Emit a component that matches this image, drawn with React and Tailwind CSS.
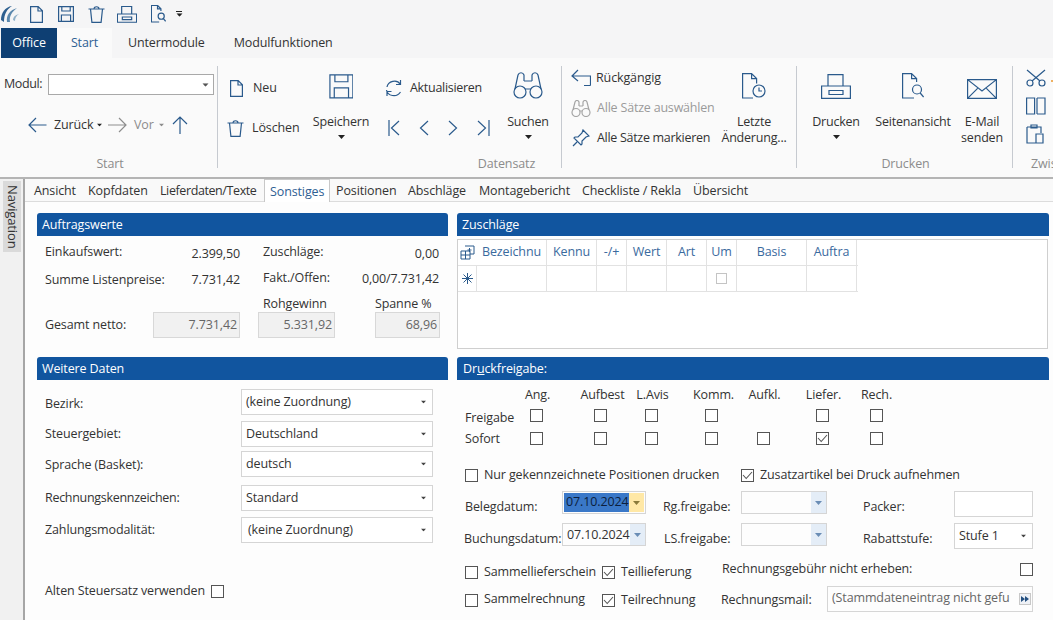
import React from "react";

const S = "#2a5a8c";
const Ic = ({ w, h, className = "", color = S, sw = 1.2, children }) => (
  <svg width={w} height={h} viewBox={`0 0 ${w} ${h}`} fill="none" stroke={color} strokeWidth={sw} className={`shrink-0 ${className}`}>
    {children}
  </svg>
);
const Caret = ({ color = "#222", className = "" }) => (
  <svg width="7" height="4" viewBox="0 0 7 4" className={`shrink-0 ${className}`}><path d="M0 0h7L3.5 4z" fill={color} /></svg>
);
const DocI = () => (
  <Ic w={13} h={17}><path d="M.6.6h7.6l4.2 4.2v11.6H.6zM8 .6v4.4h4.4" /></Ic>
);
const TrashI = () => (
  <Ic w={17} h={17}><path d="M.5 3h16M2.5 3l1.4 13.4h9.2L14.5 3M6 3c0-3 5-3 5 0" /></Ic>
);
const SaveI = ({ s = 1 }) => (
  <Ic w={16 * s} h={16 * s} sw={1.2 / s}><g transform={`scale(${s})`}><path d="M.6.6h14.8v14.8H.6zM3.8.6v4.4h8.4V.6M3.4 15.4V9h9.2v6.4" /></g></Ic>
);
const PrintI = ({ w = 30, h = 25 }) => (
  <Ic w={w} h={h} sw={1.2 * 30 / w}><g transform={`scale(${w / 30})`}><path d="M7 12V.6h15V12M.6 12h28.8v12.4H.6zM8 16.5h14v4H8z" /></g></Ic>
);
const PreviewI = ({ s = 1 }) => (
  <Ic w={22 * s} h={26 * s} sw={1.2 / s}><g transform={`scale(${s})`}><path d="M12 25H.6V.6h9l5 5V9M9.6.6v5h5" /><circle cx="15" cy="16.5" r="4.5" /><path d="M18.2 20l3.4 4" /></g></Ic>
);
const Big = ({ icon, lines, caret, w, ml = 0 }) => (
  <div className="flex flex-col items-center" style={{ width: w, marginLeft: ml }}>
    <div className="flex items-end justify-center h-[33px]">{icon}</div>
    <div className="mt-[15px] text-center leading-[16px] whitespace-nowrap tracking-[-0.2px]">
      {lines.map((l) => <div key={l}>{l}</div>)}
    </div>
    {caret && <Caret className="mt-[5px]" />}
  </div>
);
const Group = ({ w, label, children, labelClass = "", last }) => (
  <div className={`shrink-0 flex flex-col relative ${last ? "" : "border-r border-[#c6cad0]"} h-[102px] mt-[8px]`} style={{ width: w }}>
    <div className="flex h-[90px] shrink-0">{children}</div>
    <div className={`text-center text-[#8c8c8c] leading-[16px] ${labelClass}`}>{label}</div>
  </div>
);

const Check = ({ on, className = "", light }) => (
  <div className={`w-[13px] h-[13px] shrink-0 border ${light ? "border-[#c4c4c4]" : "border-[#555]"} bg-white flex items-center justify-center ${className}`}>
    {on && (
      <svg width="11" height="9" viewBox="0 0 11 9" fill="none" stroke="#555" strokeWidth="1.1"><path d="M1 4l3.2 3.5L10 1" /></svg>
    )}
  </div>
);
const Header = ({ children, className = "" }) => (
  <div className={`h-[23px] bg-[#11559f] text-white rounded-t-[3px] px-[5px] leading-[23px] text-[12.5px] ${className}`}>{children}</div>
);
const Select = ({ v, w = 192, h = 26, indent = 4 }) => (
  <div className="flex items-center justify-between border border-[#d5d5d5] bg-white shrink-0 pr-[5px]" style={{ width: w, height: h, paddingLeft: indent }}>
    <span>{v}</span>
    <Caret className="scale-75" color="#444" />
  </div>
);
const Row = ({ label, v, h, mt, indent, off = 0, labelClass = "" }) => (
  <div className="flex items-center" style={{ height: h, marginTop: mt }}>
    <div className={`w-[204px] pl-[8px] whitespace-nowrap ${labelClass}`} style={{ marginTop: off * 2 }}>{label}</div>
    <Select v={v} h={h} indent={indent} />
  </div>
);
const BlueDrop = ({ className = "" }) => (
  <div className={`w-[15px] self-stretch flex items-center justify-center bg-[#e4edf7] ${className}`}>
    <Caret color="#6a8db5" />
  </div>
);
const ReadOnly = ({ w, v, ml }) => (
  <div className="h-[26px] border border-[#d8d8d8] bg-[#f1f1f1] text-[#666] text-right pr-[2px] leading-[24px]" style={{ width: w, marginLeft: ml }}>{v}</div>
);

const tabs = [
  ["Ansicht", 54], ["Kopfdaten", 72], ["Lieferdaten/Texte", 110.5], ["Sonstiges", 65.5], ["Positionen", 72],
  ["Abschläge", 71], ["Montagebericht", 103], ["Checkliste / Rekla", 111], ["Übersicht", 60],
];
const cols = [
  { w: 19, t: "" }, { w: 70, t: "Bezeichnu" }, { w: 50, t: "Kennu" }, { w: 30, t: "-/+" }, { w: 40, t: "Wert" },
  { w: 40, t: "Art" }, { w: 30, t: "Um" }, { w: 70, t: "Basis" }, { w: 50, t: "Auftra" },
];
const freigabe = [
  ["Ang.", 0, 2], ["Aufbest", 51, 4], ["L.Avis", 38, 2], ["Komm.", 47, 4], ["Aufkl.", 39, 2], ["Liefer.", 46, 2], ["Rech.", 41, 0],
];

export default function App() {
  return (
    <div className="w-[1053px] h-[620px] overflow-hidden bg-white text-[12.5px] text-[#333] flex flex-col" style={{ fontFamily: '"Open Sans", "Noto Sans", sans-serif', letterSpacing: "-0.12px" }}>
      {/* quick access */}
      <div className="h-[28px] bg-[#f5f5f6] flex items-center shrink-0">
        <svg width="18" height="19" viewBox="0 0 18 19" fill="none" className="ml-[1px] shrink-0">
          <path d="M0 15C0 8 4 2 11 1 6 4 3 9 3 17z" fill="#2d5f8f" />
          <path d="M6 17C5 10 9 5 16 3 11 7 8 11 9 17z" fill="#5b88ad" />
          <path d="M12 15c0-3 2-5 6-6-3 2-4 4-4 7z" fill="#8fb0c8" />
        </svg>
        <div className="ml-[11px] flex items-center"><DocI /></div>
        <div className="ml-[15px]"><SaveI /></div>
        <div className="ml-[14px]"><TrashI /></div>
        <div className="ml-[12px]"><PrintI w={20} h={17} /></div>
        <div className="ml-[14px]"><PreviewI s={0.68} /></div>
        <div className="ml-[10px] flex flex-col items-center gap-[1px]">
          <div className="w-[6px] h-[1px] bg-[#222]" />
          <Caret className="scale-90" />
        </div>
      </div>
      {/* ribbon tabs */}
      <div className="h-[30px] bg-[#f5f5f6] flex items-stretch shrink-0 pl-[1px]">
        <div className="w-[56px] bg-[#0e3f73] text-white flex items-center justify-center">Office</div>
        <div className="w-[55px] bg-[#fafafa] text-[#2f6093] flex items-center justify-center">Start</div>
        <div className="ml-[16px] flex items-center">Untermodule</div>
        <div className="ml-[29px] flex items-center">Modulfunktionen</div>
      </div>
      {/* ribbon */}
      <div className="h-[121px] bg-[#fafafa] border-b-2 border-[#b4b4b4] flex shrink-0 overflow-hidden">
        <Group w={218} label="Start" labelClass="pl-[3px]">
          <div className="flex flex-col w-full">
            <div className="flex items-center mt-[8px] h-[21px]">
              <span className="ml-[4px] w-[44px] whitespace-nowrap tracking-[-0.4px]">Modul:</span>
              <div className="w-[166px] h-[21px] border border-[#a9a9a9] bg-white flex items-center justify-end pr-[4px]"><Caret className="scale-90" color="#555" /></div>
            </div>
            <div className="flex items-center mt-[19px] ml-[28px] h-[22px]">
              <Ic w={19} h={16}><path d="M18.500 8H1M8 1 1 8l7 7" /></Ic>
              <span className="ml-[7px] w-[38px]">Zurück</span>
              <Caret className="ml-[4px] scale-75" />
              <Ic w={19} h={16} className="ml-[5px]" color="#8d8d8d"><path d="M0 8h18M11 1l7 7-7 7" /></Ic>
              <span className="ml-[7px] w-[20px] text-[#8c8c8c]">Vor</span>
              <Caret className="ml-[4px] scale-75" color="#8c8c8c" />
              <Ic w={16} h={18} className="ml-[7px]"><path d="M8 18V1M1 8l7-7 7 7" /></Ic>
            </div>
          </div>
        </Group>
        <Group w={344} label="Datensatz" labelClass="pl-[234px]">
          <div className="flex flex-col w-[83px] shrink-0">
            <div className="flex items-center h-[17px] mt-[14px] ml-[12px]">
              <DocI />
              <span className="ml-[10px]">Neu</span>
            </div>
            <div className="flex items-center h-[17px] mt-[23px] ml-[9px]">
              <TrashI />
              <span className="ml-[8px] whitespace-nowrap">Löschen</span>
            </div>
          </div>
          <Big w={70} ml={5} icon={<SaveI s={1.55} />} lines={["Speichern"]} caret />
          <div className="flex flex-col shrink-0 ml-[2px]">
            <div className="flex items-center h-[20px] mt-[12px] ml-[7px]">
              <Ic w={18} h={18}><path d="M2 8c1-6 10-8 13-3M1.500 11c1 6 10 8 14 2M15.500 1v4.500H11M2 17v-4.500h4.500" /></Ic>
              <span className="ml-[7px] whitespace-nowrap tracking-[-0.3px]">Aktualisieren</span>
            </div>
            <div className="flex items-center h-[16px] mt-[22px] ml-[10px]">
              <Ic w={12} h={16}><path d="M1 0v16M11 1 3.500 8l7.500 7" /></Ic>
              <Ic w={10} h={16} className="ml-[19px]"><path d="M9 1 1.500 8 9 15" /></Ic>
              <Ic w={10} h={16} className="ml-[19px]"><path d="M1 1l7.500 7L1 15" /></Ic>
              <Ic w={13} h={16} className="ml-[19px]"><path d="M1 1l7.500 7L1 15M12 0v16" /></Ic>
            </div>
          </div>
          <Big w={52} ml={12} icon={
            <Ic w={30} h={27}><path d="M2 17 5 3c1-3 5-3 6 0v6M28 17 25 3c-1-3-5-3-6 0v6M11 9h8M12 17h6" /><circle cx="7" cy="20" r="6" /><circle cx="23" cy="20" r="6" /></Ic>
          } lines={["Suchen"]} caret />
        </Group>
        <Group w={235} label="">
          <div className="flex flex-col w-[159px] shrink-0 whitespace-nowrap">
            <div className="flex items-center h-[20px] mt-[2px] ml-[9px]">
              <Ic w={20} h={18}><path d="M19.500 16.500V7H1M7 1 1 7l6 5M19.500 16.500H13" /></Ic>
              <span className="ml-[5px]">Rückgängig</span>
            </div>
            <div className="flex items-center h-[20px] mt-[10px] ml-[9px] text-[#9a9a9a]">
              <Ic w={20} h={17} color="#a5a5a5"><path d="M2 10 4 2c1-2 3-2 4 0v4M18 10 16 2c-1-2-3-2-4 0v4M8 6h4M9 11h2" /><circle cx="5" cy="12.500" r="4" /><circle cx="15" cy="12.500" r="4" /></Ic>
              <span className="ml-[6px] tracking-[-0.2px]">Alle Sätze auswählen</span>
            </div>
            <div className="flex items-center h-[20px] mt-[10px] ml-[10px]">
              <Ic w={18} h={18}><path d="M11 1l6 6-3 1-4 4 0 3-1 1-7-7 1-1 3 0 4-4zM5 13 1 17" /></Ic>
              <span className="ml-[7px] tracking-[-0.3px]">Alle Sätze markieren</span>
            </div>
          </div>
          <Big w={66} icon={
            <Ic w={24} h={26}><path d="M11 25H.6V.6h9l5 5v5M9.600.6v5h5" /><circle cx="17" cy="18" r="6" /><path d="M17 14.500V18h3" /></Ic>
          } lines={["Letzte", "Änderung..."]} />
        </Group>
        <Group w={216} label="Drucken" labelClass="pl-[2px]">
          <Big w={48} ml={15} icon={<PrintI />} lines={["Drucken"]} caret />
          <Big w={76} ml={15} icon={<PreviewI />} lines={["Seitenansicht"]} />
          <Big w={46} ml={8} icon={
            <Ic w={30} h={20}><path d="M.6.6h28.800v18.800H.6zM.6.6 15 12 29.400.6M.6 19.400l10-10M29.400 19.400l-10-10" /></Ic>
          } lines={["E-Mail", "senden"]} />
        </Group>
        <Group w={40} label="Zwis" last labelClass="text-left pl-[18px]">
          <div className="flex flex-col ml-[13px] mt-[3px] relative">
            <Ic w={20} h={18}><circle cx="4" cy="14" r="3" /><circle cx="16" cy="14" r="3" /><path d="M6 12 19 1M14 12 1 1" /></Ic>
            <Ic w={20} h={18} className="mt-[10px]"><path d="M.6 1h8v16h-8zM11 1h8v16h-8M11 17V1" /></Ic>
            <Ic w={20} h={20} className="mt-[9px]"><path d="M1 3h14v6M1 3v16h9M5 1h6v3H5zM10 10h7v9h-7z" /></Ic>
          </div>
          <div className="absolute left-[38px] top-[14px] w-[2px] h-[2px] bg-[#eeb060]" />
        </Group>
      </div>
      {/* body */}
      <div className="flex-1 flex min-h-0">
        <div className="w-[25px] shrink-0 bg-[#f1f1f1] border-r-2 border-[#a6a6a6] pl-[3px] pt-[2px]">
          <div className="w-[18px] h-[71px] bg-[#dadada] flex items-center justify-center text-[13px]" style={{ writingMode: "vertical-rl" }}>Navigation</div>
        </div>
        <div className="flex-1 min-w-0 flex flex-col">
          <div className="h-[23px] bg-[#f9f9f9] border-b border-[#dcdcdc] flex items-stretch shrink-0 pl-[2.500px]">
            {tabs.map(([t, w]) => (
              <div key={t} className={`whitespace-nowrap flex items-center shrink-0 pt-[2px] ${t === "Sonstiges" ? "pl-[5px] bg-white text-[#2f6093] border-x border-t border-[#c8c8c8] -mb-[1px]" : "pl-[6.500px]"} ${t === "Lieferdaten/Texte" ? "tracking-[-0.4px]" : ""}`} style={{ width: w }}>{t}</div>
            ))}
          </div>
          <div className="flex-1 min-h-0 bg-[#fdfdfd] pl-[12px] pt-[11px] grid grid-cols-[411px_592px] grid-rows-[144px_1fr] gap-x-[9px]">
            {/* Auftragswerte */}
            <div>
              <Header>Auftragswerte</Header>
              <div className="flex h-[26px] mt-[5px] items-center pl-[8px]">
                <div className="w-[146px] -mt-[3px]">Einkaufswert:</div>
                <div className="w-[49px] text-right whitespace-nowrap">2.399,50</div>
                <div className="w-[70px] ml-[23px] -mt-[3px]">Zuschläge:</div>
                <div className="w-[106px] text-right">0,00</div>
              </div>
              <div className="flex h-[26px] items-center pl-[8px]">
                <div className="w-[146px] whitespace-nowrap">Summe Listenpreise:</div>
                <div className="w-[49px] text-right">7.731,42</div>
                <div className="w-[70px] ml-[23px] -mt-[4px] whitespace-nowrap">Fakt./Offen:</div>
                <div className="w-[106px] text-right -mt-[1px]">0,00/7.731,42</div>
              </div>
              <div className="flex h-[14px] items-center pl-[226px] mt-[4px]">
                <div className="w-[112px] whitespace-nowrap">Rohgewinn</div>
                <div className="whitespace-nowrap">Spanne %</div>
              </div>
              <div className="flex items-center pl-[8px] mt-[1px]">
                <div className="w-[108px] whitespace-nowrap">Gesamt netto:</div>
                <ReadOnly w={87} v="7.731,42" />
                <ReadOnly w={77} ml={18} v="5.331,92" />
                <ReadOnly w={65} ml={40} v="68,96" />
              </div>
            </div>
            {/* Zuschläge */}
            <div>
              <Header>Zuschläge</Header>
              <div className="mt-[3px] h-[110px] w-[591px] border border-[#cfcfcf] bg-white">
                <div className="flex h-[26px] border-b border-[#e2e2e2] w-[400px] text-[#3a6a9e]">
                  {cols.map((c, i) => (
                    <div key={i} className={`flex items-center justify-center shrink-0 border-r border-[#e2e2e2] ${i === 0 ? "border-r-0" : ""}`} style={{ width: c.w }}>
                      {i === 0 ? (
                        <Ic w={15} h={15} sw={1}><path d="M5 1h9v8h-4M1 6h9v8H1zM1 10h9M5.500 6v8M9.500 3v4M7.500 5h4" /></Ic>
                      ) : c.t}
                    </div>
                  ))}
                </div>
                <div className="flex h-[26px] border-b border-[#e2e2e2] w-[400px]">
                  {cols.map((c, i) => (
                    <div key={i} className="flex items-center justify-center shrink-0 border-r border-[#e2e2e2]" style={{ width: c.w }}>
                      {i === 0 && <Ic w={11} h={11} sw={1}><path d="M5.500 0v11M0 5.500h11M1.500 1.500l8 8M9.500 1.500l-8 8" /></Ic>}
                      {c.t === "Um" && <Check light className="!w-[11px] !h-[11px]" />}
                    </div>
                  ))}
                </div>
              </div>
            </div>
            {/* Weitere Daten */}
            <div className="min-h-0">
              <Header>Weitere Daten</Header>
              <Row label="Bezirk:" v="(keine Zuordnung)" h={26} mt={9} off={2} />
              <Row label="Steuergebiet:" v="Deutschland" h={26} mt={6} />
              <Row label="Sprache (Basket):" v="deutsch" h={26} mt={4} off={1} />
              <Row label="Rechnungskennzeichen:" v="Standard" h={26} mt={8} labelClass="tracking-[-0.3px]" />
              <Row label="Zahlungsmodalität:" v="(keine Zuordnung)" h={26} mt={6} indent={6} />
              <div className="flex items-center mt-[39px] pl-[8px]">
                <span className="whitespace-nowrap">Alten Steuersatz verwenden</span>
                <Check className="ml-[6px]" />
              </div>
            </div>
            {/* Druckfreigabe */}
            <div className="min-h-0 whitespace-nowrap">
              <Header className="pl-[6px]">Dr<span className="underline">u</span>ckfreigabe:</Header>
              <div className="flex h-[16px] mt-[6px] pl-[73px]">
                {freigabe.map(([t, m, p]) => (
                  <div key={t} className="w-[13px] flex justify-center" style={{ marginLeft: m, paddingLeft: p }}>{t}</div>
                ))}
              </div>
              <div className="flex items-center h-[13px] mt-[7px] pl-[8px]">
                <div className="w-[65px] mt-[6px]">Freigabe</div>
                {freigabe.map(([t, m], i) => (i === 4 ? <div key={t} className="w-[13px]" style={{ marginLeft: m }} /> : <div key={t} style={{ marginLeft: m }}><Check /></div>))}
              </div>
              <div className="flex items-center h-[13px] mt-[10px] pl-[8px]">
                <div className="w-[65px] mt-[2px]">Sofort</div>
                {freigabe.map(([t, m]) => <div key={t} style={{ marginLeft: m }}><Check on={t === "Liefer."} /></div>)}
              </div>
              <div className="flex items-center h-[13px] mt-[24px] pl-[8px]">
                <Check />
                <span className="ml-[6px] w-[257px]">Nur gekennzeichnete Positionen drucken</span>
                <Check on />
                <span className="ml-[6px]">Zusatzartikel bei Druck aufnehmen</span>
              </div>
              <div className="flex h-[26px] mt-[9px] pl-[8px]">
                <div className="w-[97px] mt-[7px]">Belegdatum:</div>
                <div className="w-[84px] h-[23px] border border-[#d5d5d5] flex items-stretch p-[1px]">
                  <div className="bg-[#3a78c8] text-[#0c1f3d] px-[2px] w-[65px] leading-[18px]">07.10.2024</div>
                  <div className="w-[15px] bg-[#ffe8a6] flex items-center justify-center"><Caret color="#8a7a3a" /></div>
                </div>
                <div className="w-[78px] ml-[17px] mt-[7px]">Rg.freigabe:</div>
                <div className="w-[86px] h-[23px] border border-[#d5d5d5] flex justify-end"><BlueDrop /></div>
                <div className="w-[91px] ml-[36px] mt-[7px]">Packer:</div>
                <div className="w-[79px] h-[26px] border border-[#d5d5d5] bg-white" />
              </div>
              <div className="flex h-[26px] mt-[6px] pl-[7px]">
                <div className="w-[98px] mt-[7px]">Buchungsdatum:</div>
                <div className="w-[84px] h-[23px] border border-[#d5d5d5] flex items-stretch justify-between pl-[4px]">
                  <span className="leading-[21px]">07.10.2024</span>
                  <BlueDrop />
                </div>
                <div className="w-[77px] ml-[18px] mt-[7px]">LS.freigabe:</div>
                <div className="w-[86px] h-[23px] border border-[#d5d5d5] flex justify-end"><BlueDrop /></div>
                <div className="w-[91px] ml-[36px] mt-[7px]">Rabattstufe:</div>
                <Select v="Stufe 1" w={79} />
              </div>
              <div className="flex h-[16px] mt-[15px] pl-[8px] items-center">
                <Check />
                <span className="ml-[6px] w-[118px]">Sammellieferschein</span>
                <Check on />
                <span className="ml-[6px] w-[101px]">Teillieferung</span>
                <span className="w-[298px] -mt-[6px]">Rechnungsgebühr nicht erheben:</span>
                <Check className="-mt-[6px]" />
              </div>
              <div className="flex h-[26px] mt-[6px] pl-[8px] items-center">
                <Check className="mt-[2px]" />
                <span className="ml-[6px] w-[118px]">Sammelrechnung</span>
                <Check on className="mt-[2px]" />
                <span className="ml-[6px] w-[100px] mt-[2px]">Teilrechnung</span>
                <span className="w-[106px] mt-[2px]">Rechnungsmail:</span>
                <div className="w-[206px] h-[26px] border border-[#d5d5d5] flex items-center justify-between pl-[4px] pr-[1px]">
                  <span className="text-[#666] -mt-[2px] overflow-hidden">(Stammdateneintrag nicht gefu</span>
                  <div className="w-[12px] h-[12px] border border-[#c8c8c8] bg-[#eef1f6] flex items-center justify-center shrink-0">
                    <svg width="8" height="6" viewBox="0 0 8 6"><path d="M0 0l4 3-4 3zM4 0l4 3-4 3z" fill="#234f80" /></svg>
                  </div>
                </div>
              </div>
            </div>
          </div>
        </div>
      </div>
    </div>
  );
}
